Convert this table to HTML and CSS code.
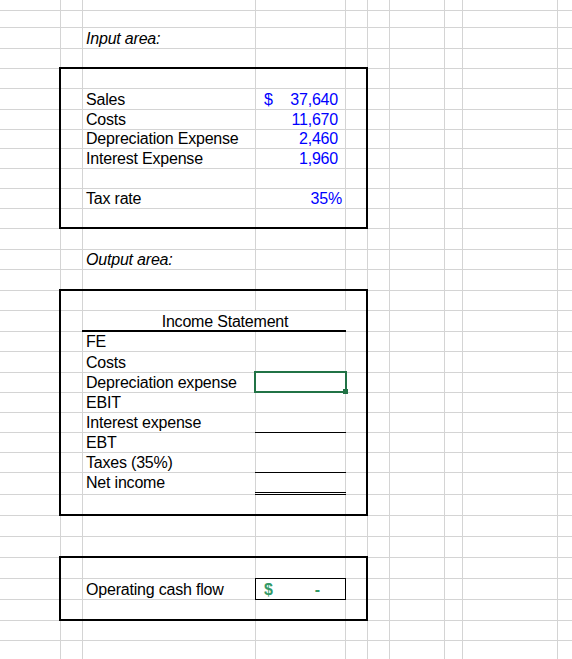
FILE: index.html
```html
<!DOCTYPE html>
<html lang="en">
<head>
<meta charset="utf-8">
<title>Income Statement</title>
<link rel="stylesheet" href="styles.css">
</head>
<body>
<div class="stack">
  <div class="grid cells">
    <span></span><span></span><span></span><span></span><span></span><span></span><span></span><span></span><span></span><span></span>
    <span></span><span></span><span></span><span></span><span></span><span></span><span></span><span></span><span></span><span></span>
    <span></span><span></span><span></span><span></span><span></span><span></span><span></span><span></span><span></span><span></span>
    <span></span><span></span><span></span><span></span><span></span><span></span><span></span><span></span><span></span><span></span>
    <span></span><span></span><span></span><span></span><span></span><span></span><span></span><span></span><span></span><span></span>
    <span></span><span></span><span></span><span></span><span></span><span></span><span></span><span></span><span></span><span></span>
    <span></span><span></span><span></span><span></span><span></span><span></span><span></span><span></span><span></span><span></span>
    <span></span><span></span><span></span><span></span><span></span><span></span><span></span><span></span><span></span><span></span>
    <span></span><span></span><span></span><span></span><span></span><span></span><span></span><span></span><span></span><span></span>
    <span></span><span></span><span></span><span></span><span></span><span></span><span></span><span></span><span></span><span></span>
    <span></span><span></span><span></span><span></span><span></span><span></span><span></span><span></span><span></span><span></span>
    <span></span><span></span><span></span><span></span><span></span><span></span><span></span><span></span><span></span><span></span>
    <span></span><span></span><span></span><span></span><span></span><span></span><span></span><span></span><span></span><span></span>
    <span></span><span></span><span></span><span></span><span></span><span></span><span></span><span></span><span></span><span></span>
    <span></span><span></span><span></span><span></span><span></span><span></span><span></span><span></span><span></span><span></span>
    <span></span><span></span><span></span><span></span><span></span><span></span><span></span><span></span><span></span><span></span>
    <span></span><span></span><span></span><span></span><span></span><span></span><span></span><span></span><span></span><span></span>
    <span></span><span></span><span></span><span></span><span></span><span></span><span></span><span></span><span></span><span></span>
    <span></span><span></span><span></span><span></span><span></span><span></span><span></span><span></span><span></span><span></span>
    <span></span><span></span><span></span><span></span><span></span><span></span><span></span><span></span><span></span><span></span>
    <span></span><span></span><span></span><span></span><span></span><span></span><span></span><span></span><span></span><span></span>
    <span></span><span></span><span></span><span></span><span></span><span></span><span></span><span></span><span></span><span></span>
    <span></span><span></span><span></span><span></span><span></span><span></span><span></span><span></span><span></span><span></span>
    <span></span><span></span><span></span><span></span><span></span><span></span><span></span><span></span><span></span><span></span>
    <span></span><span></span><span></span><span></span><span></span><span></span><span></span><span></span><span></span><span></span>
    <span></span><span></span><span></span><span></span><span></span><span></span><span></span><span></span><span></span><span></span>
    <span></span><span></span><span></span><span></span><span></span><span></span><span></span><span></span><span></span><span></span>
    <span></span><span></span><span></span><span></span><span></span><span></span><span></span><span></span><span></span><span></span>
    <span></span><span></span><span></span><span></span><span></span><span></span><span></span><span></span><span></span><span></span>
    <span></span><span></span><span></span><span></span><span></span><span></span><span></span><span></span><span></span><span></span>
    <span></span><span></span><span></span><span></span><span></span><span></span><span></span><span></span><span></span><span></span>
    <span></span><span></span><span></span><span></span><span></span><span></span><span></span><span></span><span></span><span></span>
    <span></span><span></span><span></span><span></span><span></span><span></span><span></span><span></span><span></span><span></span>
  </div>

  <div class="grid layer">
    <div class="t it cC r3">Input area:</div>

    <div class="t cC r6">Sales</div>
    <div class="v cD r6"><span>$</span><span>37,640</span></div>
    <div class="t cC r7">Costs</div>
    <div class="v cD r7"><span></span><span>11,670</span></div>
    <div class="t cC r8">Depreciation Expense</div>
    <div class="v cD r8"><span></span><span>2,460</span></div>
    <div class="t cC r9">Interest Expense</div>
    <div class="v cD r9"><span></span><span>1,960</span></div>
    <div class="t cC r11">Tax rate</div>
    <div class="v pct cD r11"><span></span><span>35%</span></div>
    <div class="box box1"></div>

    <div class="t it cC r14">Output area:</div>

    <div class="title cCE r17">Income Statement</div>
    <div class="uline cCD r17"></div>
    <div class="t cC r18">FE</div>
    <div class="t cC r19">Costs</div>
    <div class="t cC r20">Depreciation expense</div>
    <div class="t cC r21">EBIT</div>
    <div class="t cC r22">Interest expense</div>
    <div class="t cC r23">EBT</div>
    <div class="t cC r24">Taxes (35%)</div>
    <div class="t net cC r25">Net income</div>
    <div class="ul1 cD r22"></div>
    <div class="ul1 cD r24"></div>
    <div class="ul2 cD r25"></div>
    <div class="sel cD r20"><span class="handle"></span></div>
    <div class="box box2"></div>

    <div class="t cC r30">Operating cash flow</div>
    <div class="ocf cD r30"><span>$</span><span>-</span></div>
    <div class="box box3"></div>
  </div>
</div>
</body>
</html>
```

FILE: styles.css
```css
html, body {
  margin: 0;
  padding: 0;
  background: #fff;
  overflow: hidden;
}

body {
  width: 572px;
  height: 659px;
  font-family: "Liberation Sans", Arial, sans-serif;
  font-size: 16px;
  letter-spacing: -0.2px;
  color: #000;
}

.stack {
  display: grid;
}

.stack > .grid {
  grid-area: 1 / 1;
}

.grid {
  display: grid;
  grid-template-columns: 60px 21px 172px 89px 21px 21px 54px 17px 94px 20px;
  grid-template-rows:
    10px 16px 20px 19px 19px 20px 19px 18px 19px 19px 19px
    19px 20px 19px 20px 19px 20px 19px 20px 19px 19px 19px
    19px 19px 21px 20px 20px 20px 20px 20px 20px 19px 20px;
  gap: 1px;
}

.cells {
  background: #d4d4d4;
}

.cells > span {
  background: #fff;
}

/* column placement */
.cC { grid-column: 3; }
.cD { grid-column: 4; }
.cCD { grid-column: 3 / 5; }
.cCE { grid-column: 3 / 6; }

/* row placement */
.r3 { grid-row: 3; }
.r6 { grid-row: 6; }
.r7 { grid-row: 7; }
.r8 { grid-row: 8; }
.r9 { grid-row: 9; }
.r11 { grid-row: 11; }
.r14 { grid-row: 14; }
.r17 { grid-row: 17; }
.r18 { grid-row: 18; }
.r19 { grid-row: 19; }
.r20 { grid-row: 20; }
.r21 { grid-row: 21; }
.r22 { grid-row: 22; }
.r23 { grid-row: 23; }
.r24 { grid-row: 24; }
.r25 { grid-row: 25; }
.r30 { grid-row: 30; }

/* text cells */
.t {
  align-self: end;
  line-height: 19px;
  padding-left: 3px;
  white-space: nowrap;
}

.it {
  font-style: italic;
}

.net {
  padding-bottom: 2px;
}

.v {
  align-self: end;
  display: flex;
  justify-content: space-between;
  line-height: 19px;
  padding: 0 7px 0 8px;
  color: #0000ff;
  white-space: nowrap;
}

.v.pct {
  padding-right: 3px;
}

.title {
  display: flex;
  align-items: flex-end;
  justify-content: center;
  line-height: 19px;
  background: #fff;
  white-space: nowrap;
}

/* borders */
.box {
  border: 2px solid #000;
  margin: -2px -1px -1px -2px;
}

.box1 { grid-column: 2 / 6; grid-row: 5 / 13; }
.box2 { grid-column: 2 / 6; grid-row: 16 / 27; }
.box3 { grid-column: 2 / 6; grid-row: 29 / 32; }

.uline {
  border-bottom: 2px solid #000;
  margin: 0 -1px -1px -1px;
}

.ul1 {
  border-bottom: 1px solid #000;
  margin: 0 -1px -1px -1px;
}

.ul2 {
  border-bottom: 3px double #000;
  margin: 0 -1px -1px -1px;
}

.sel {
  position: relative;
  border: 2px solid #217346;
  margin: -2px -2px -1px -2px;
}

.handle {
  position: absolute;
  right: -3px;
  bottom: -3px;
  width: 5px;
  height: 5px;
  background: #217346;
}

.ocf {
  border: 1px solid #000;
  margin: -1px;
  display: flex;
  justify-content: space-between;
  align-items: flex-end;
  line-height: 19px;
  padding: 0 25px 0 8px;
  font-weight: bold;
  color: #339966;
}
```
